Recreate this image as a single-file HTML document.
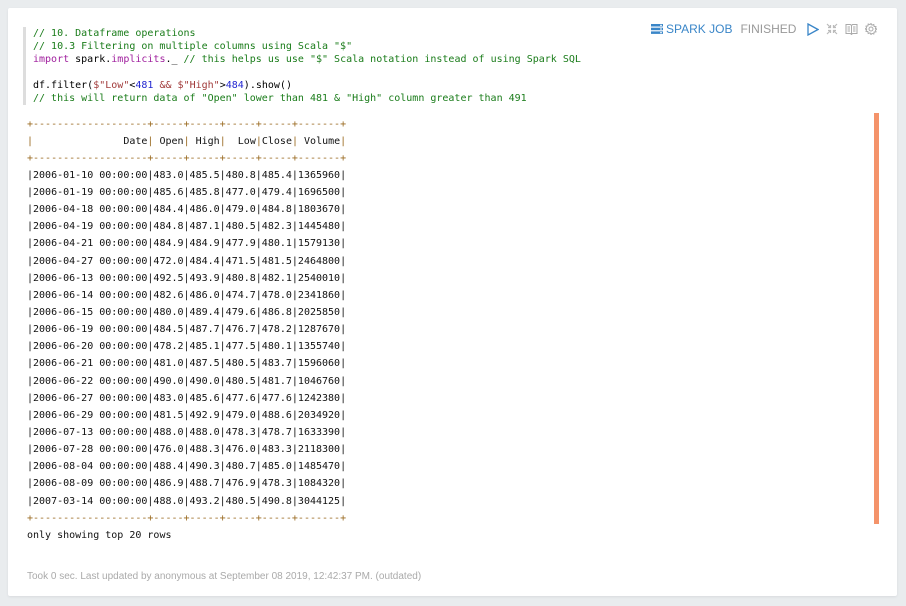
<!DOCTYPE html>
<html><head><style>
body{margin:0;width:906px;height:606px;background:#e9ecee;overflow:hidden;font-family:"Liberation Sans",sans-serif;}
.card{position:absolute;left:8px;top:8px;width:889px;height:588px;background:#fff;box-shadow:0 1px 2px #d8dbde;border-radius:2px;}
.code{position:absolute;left:15px;top:19px;border-left:3px solid #ddd;padding-left:7px;font-family:"DejaVu Sans Mono",monospace;font-size:10px;line-height:13px;color:#000;white-space:pre;width:580px;}
.c{color:#1a7c1a}.k{color:#a0209e}.s{color:#a13a3a}.n{color:#2125d0}
.out{position:absolute;left:19px;top:107.5px;font-family:"DejaVu Sans Mono",monospace;font-size:10px;line-height:17.14px;white-space:pre;color:#111;}
.o{color:#9a6a20}
.bar{position:absolute;left:866px;top:105px;width:5px;height:411px;background:#f4936a;}
.foot{position:absolute;left:19px;top:563px;font-size:10px;color:#aaa;}
.hdr{position:absolute;left:643px;top:14px;font-size:12px;color:#999;display:flex;align-items:center;}
</style></head><body>
<div class="card">
<div class="code"><span class="c">// 10. Dataframe operations</span>
<span class="c">// 10.3 Filtering on multiple columns using Scala "$"</span>
<span class="k">import</span> spark.<span class="k">implicits</span>._ <span class="c">// this helps us use "$" Scala notation instead of using Spark SQL</span>

df.filter(<span class="s">$"Low"</span>&lt;<span class="n">481</span> <span class="s">&amp;&amp;</span> <span class="s">$"High"</span>&gt;<span class="n">484</span>).show()
<span class="c">// this will return data of "Open" lower than 481 &amp; "High" column greater than 491</span></div>
<div class="hdr">
<svg width="12" height="10" viewBox="0 0 12 10"><rect x="0" y="0" width="12" height="2.5" fill="#3a86c8"/><rect x="0" y="3.7" width="12" height="2.5" fill="#3a86c8"/><rect x="0" y="7.4" width="12" height="2.5" fill="#3a86c8"/><rect x="9" y="0.8" width="2" height="1" fill="#fff"/><rect x="9" y="4.5" width="2" height="1" fill="#fff"/><rect x="9" y="8.2" width="2" height="1" fill="#fff"/></svg>
<span style="color:#3a86c8;margin-left:3px">SPARK JOB</span>
<span style="margin-left:8px">FINISHED</span>
<svg style="margin-left:11px" width="12" height="13" viewBox="0 0 12 13"><path d="M1 1 L11 6.5 L1 12 Z" fill="none" stroke="#3a86c8" stroke-width="1.3"/></svg>
<svg style="margin-left:7px" width="12" height="12" viewBox="0 0 12 12" stroke="#bbb" stroke-width="1.2" fill="none"><path d="M1 1l3.5 3.5M4.5 2v2.5H2M11 1L7.5 4.5M7.5 2v2.5H10M1 11l3.5-3.5M2 7.5h2.5V10M11 11L7.5 7.5M10 7.5H7.5V10"/></svg>
<svg style="margin-left:7px" width="13" height="12" viewBox="0 0 13 12" stroke="#aaa" stroke-width="1" fill="none"><path d="M1 1.5h4.5l1 1 1-1H12v9H7.5l-1 1-1-1H1z M6.5 2.5v8.5 M2.5 4h2.5M2.5 6h2.5M2.5 8h2.5M8 4h2.5M8 6h2.5M8 8h2.5"/></svg>
<svg style="margin-left:7px" width="12" height="12" viewBox="0 0 12 12" stroke="#aaa" stroke-width="1" fill="none"><circle cx="6" cy="6" r="2"/><path d="M6 .5l1 1.6 1.8-.6.3 1.9 1.9.3-.6 1.8L12 6l-1.6 1 .6 1.8-1.9.3-.3 1.9-1.8-.6L6 11.5l-1-1.6-1.8.6-.3-1.9-1.9-.3.6-1.8L0 6l1.6-1-.6-1.8 1.9-.3.3-1.9 1.8.6z"/></svg>
</div>
<div class="out"><span class="o">+-------------------+-----+-----+-----+-----+-------+</span>
<span class="o">|</span>               Date<span class="o">|</span> Open<span class="o">|</span> High<span class="o">|</span>  Low<span class="o">|</span>Close<span class="o">|</span> Volume<span class="o">|</span>
<span class="o">+-------------------+-----+-----+-----+-----+-------+</span>
|2006-01-10 00:00:00|483.0|485.5|480.8|485.4|1365960|
|2006-01-19 00:00:00|485.6|485.8|477.0|479.4|1696500|
|2006-04-18 00:00:00|484.4|486.0|479.0|484.8|1803670|
|2006-04-19 00:00:00|484.8|487.1|480.5|482.3|1445480|
|2006-04-21 00:00:00|484.9|484.9|477.9|480.1|1579130|
|2006-04-27 00:00:00|472.0|484.4|471.5|481.5|2464800|
|2006-06-13 00:00:00|492.5|493.9|480.8|482.1|2540010|
|2006-06-14 00:00:00|482.6|486.0|474.7|478.0|2341860|
|2006-06-15 00:00:00|480.0|489.4|479.6|486.8|2025850|
|2006-06-19 00:00:00|484.5|487.7|476.7|478.2|1287670|
|2006-06-20 00:00:00|478.2|485.1|477.5|480.1|1355740|
|2006-06-21 00:00:00|481.0|487.5|480.5|483.7|1596060|
|2006-06-22 00:00:00|490.0|490.0|480.5|481.7|1046760|
|2006-06-27 00:00:00|483.0|485.6|477.6|477.6|1242380|
|2006-06-29 00:00:00|481.5|492.9|479.0|488.6|2034920|
|2006-07-13 00:00:00|488.0|488.0|478.3|478.7|1633390|
|2006-07-28 00:00:00|476.0|488.3|476.0|483.3|2118300|
|2006-08-04 00:00:00|488.4|490.3|480.7|485.0|1485470|
|2006-08-09 00:00:00|486.9|488.7|476.9|478.3|1084320|
|2007-03-14 00:00:00|488.0|493.2|480.5|490.8|3044125|
<span class="o">+-------------------+-----+-----+-----+-----+-------+</span>
only showing top 20 rows</div>
<div class="bar"></div>
<div class="foot">Took 0 sec. Last updated by anonymous at September 08 2019, 12:42:37 PM. (outdated)</div>
</div>
</body></html>
